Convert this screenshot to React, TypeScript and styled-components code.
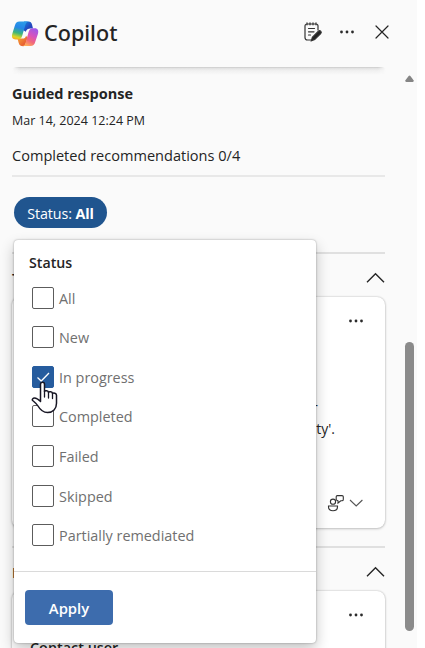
import React from "react";
import styled, { createGlobalStyle } from "styled-components";

const GlobalStyle = createGlobalStyle`
  * { box-sizing: border-box; }
  body { margin: 0; background: #fff; overflow: hidden; }
`;

const Frame = styled.div`
  width: 417px;
  height: 648px;
  overflow: hidden;
  display: flex;
  flex-direction: column;
  background: #fafafa;
  color: #242424;
  font-family: "Open Sans", "Noto Sans", sans-serif;
  font-size: 14px;
`;

const Header = styled.header`
  flex: none;
  height: 67px;
  padding: 0 27px 0 11px;
  display: flex;
  align-items: center;
`;

const Brand = styled.h1`
  margin: 0 auto 2px 5px;
  font-family: "Noto Sans", sans-serif;
  font-size: 21.6px;
  font-weight: 500;
  line-height: 30px;
`;

const Actions = styled.div`
  display: flex;
  align-items: center;
  gap: 15px;
  padding-bottom: 3px;
  svg:last-child { margin-left: 3px; }
`;

const Body = styled.div`
  flex: 1;
  min-height: 0;
  display: flex;
`;

const Content = styled.main`
  width: 401px;
  padding: 0 16px 0 12px;
  flex: none;
`;

const HeaderEdge = styled.div`
  height: 8px;
  margin-right: -1px;
  border-radius: 4px;
  background: linear-gradient(#c9c9c9, #e3e3e3 18%, #f0f0f0 45%, #fafafa);
  mask-image: linear-gradient(90deg, transparent, #000 8px, #000 calc(100% - 8px), transparent);
`;

const Title = styled.div`
  height: 100px;
  padding: 8px 0 0;
`;

const Line = styled.p<{ $size: number; $height: number; $weight?: number }>`
  margin: 0;
  font-size: ${(p) => p.$size}px;
  line-height: ${(p) => p.$height}px;
  font-weight: ${(p) => p.$weight ?? 400};
  white-space: nowrap;
`;

const Rule = styled.hr<{ $color?: string }>`
  margin: 0;
  border: 0;
  height: 2px;
  background: ${(p) => p.$color ?? "#e0e0e0"};
`;

const FilterBar = styled.div`
  position: relative;
  height: 75px;
  padding: 20px 0 0 2px;
`;

const Pill = styled.button`
  width: 93px;
  height: 31px;
  padding: 2px 0 0;
  border: 0;
  border-radius: 16px;
  background: #20558f;
  color: #fff;
  font: 400 14.3px/20px "Open Sans", sans-serif;
  letter-spacing: -0.1px;
  display: block;
  b { font-weight: 700; }
`;

const Popover = styled.div`
  position: absolute;
  z-index: 2;
  left: 2px;
  top: 63px;
  width: 302px;
  height: 403px;
  border-radius: 4px;
  background: #fff;
  box-shadow: 0 0 2px rgba(0, 0, 0, 0.38), 0 6px 14px rgba(0, 0, 0, 0.24);
`;

const Options = styled.div`
  height: 332px;
  padding: 13px 0 0 15px;
  border-bottom: 1px solid #dadada;
`;

const OptionList = styled.div`
  padding: 13.8px 0 0 3px;
`;

const Option = styled.label`
  height: 39.55px;
  display: flex;
  align-items: flex-start;
  gap: 5px;
  color: #707070;
  font-size: 14.4px;
  line-height: 22px;
`;

const OptionName = styled.span`
  padding-top: 1px;
`;

const Box = styled.span<{ $on: boolean }>`
  position: relative;
  width: 22px;
  height: 22px;
  border: 1px solid ${(p) => (p.$on ? "#265c9e" : "#5c5c5c")};
  border-radius: 2px;
  background: ${(p) => (p.$on ? "#265c9e" : "#fff")};
  svg { display: block; }
`;

const Hand = styled.svg`
  position: absolute;
  z-index: 3;
  left: -2px;
  top: 14px;
`;

const Footer = styled.div`
  padding: 18px 0 0 11px;
`;

const Apply = styled.button`
  width: 88px;
  height: 35px;
  padding: 1px 0 0;
  border: 0;
  border-radius: 4px;
  background: #3d6cad;
  color: #fff;
  font: 600 14.8px/20px "Open Sans", sans-serif;
`;

const SectionHead = styled.div`
  height: 43px;
  display: flex;
  align-items: center;
  justify-content: space-between;
  padding-top: 4px;
  font-size: 15px;
  font-weight: 600;
  svg { flex: none; }
`;

const SectionGap = styled.div`
  height: 18px;
`;

const Card = styled.section`
  height: 231px;
  border-radius: 8px;
  background: #fff;
  box-shadow: 0 0 2px rgba(0, 0, 0, 0.24), 0 1px 3px rgba(0, 0, 0, 0.18);
  padding: 16px 20px 0 18px;
  display: flex;
  flex-direction: column;
`;

const CardMenu = styled.div`
  height: 16px;
  display: flex;
  justify-content: flex-end;
`;

const Summary = styled.div`
  margin: 64px 0 0;
  width: 305px;
  font-size: 14px;
  line-height: 24px;
  text-align: right;
  span { display: block; padding-right: 17px; }
`;

const CardTools = styled.div`
  margin-top: 53px;
  padding-right: 1px;
  display: flex;
  justify-content: flex-end;
  align-items: center;
  gap: 3px;
`;

const Scrollbar = styled.div`
  width: 16px;
  padding-top: 8px;
  display: flex;
  flex-direction: column;
  align-items: center;
`;

const Thumb = styled.div`
  width: 9px;
  height: 289px;
  margin-top: 259px;
  border-radius: 5px;
  background: #8b8b8b;
`;

const CopilotLogo = () => (
  <svg width="28" height="28" viewBox="0 0 28 28" aria-hidden="true">
    <defs>
      <linearGradient id="cool" x1=".55" y1="0" x2=".3" y2="1">
        <stop offset="0" stopColor="#2b9be8" />
        <stop offset=".35" stopColor="#2586e8" />
        <stop offset=".65" stopColor="#3cb57b" />
        <stop offset=".88" stopColor="#ddd526" />
        <stop offset="1" stopColor="#f6ad26" />
      </linearGradient>
      <linearGradient id="warm" x1=".8" y1="0" x2=".3" y2="1">
        <stop offset="0" stopColor="#9a58ed" />
        <stop offset=".42" stopColor="#d952bb" />
        <stop offset=".7" stopColor="#f1677c" />
        <stop offset="1" stopColor="#ffaf58" />
      </linearGradient>
      <linearGradient id="fold" x1="0" y1="0" x2="1" y2="1">
        <stop offset="0" stopColor="#1788e1" />
        <stop offset=".6" stopColor="#2446bd" />
      </linearGradient>
      <linearGradient id="tail" x1="0" y1="0" x2="1" y2="1">
        <stop offset="0" stopColor="#f7ae35" />
        <stop offset="1" stopColor="#e24232" />
      </linearGradient>
    </defs>
    <path d="M13 1.500h4.500c2 0 3 1 3.500 3l1 4h-2.500c-2.500 0-4 1-4.700 3.200L12 10Z" fill="url(#fold)" />
    <path d="M6.500 18.500h5c2 0 3-.8 3.600-2.800l1.400 2-2.200 6.800c-.4 1.200-1 1.700-2 1.700-2.500 0-4-1-4.600-3.200Z" fill="url(#tail)" />
    <path d="M8.500 1.500H18c-2 0-3 1.300-3.600 3.300L11.200 15.700c-.6 2.100-1.800 3.800-4.200 3.800H4.500C1.500 19.500.3 17.300 1.300 13.800L3.800 5.800C4.700 2.800 5.800 1.500 8.500 1.500Z" fill="url(#cool)" />
    <path d="M19.500 26H11c2 0 3-1.300 3.600-3.300L17.600 12c.6-2.200 2-3.800 4.400-3.800h1.800c3 0 4.100 2.200 3.100 5.800l-2.600 7.700c-.9 3-2.100 4.300-4.800 4.300Z" fill="url(#warm)" />
  </svg>
);

const Notes = () => (
  <svg width="20" height="22" viewBox="0 0 20 22" fill="none" stroke="#333" strokeWidth="1.200" strokeLinecap="round">
    <path d="M8 19H4.500A2.500 2.500 0 0 1 2 16.500V5a2 2 0 0 1 2-2h9a2 2 0 0 1 2 2v4M4 1.800v2M7 1.800v2M10 1.800v2M13 1.800v2M5.500 7.500H11.500M5.500 10.800h5.500M5.500 14h2" />
    <path d="m8.400 19.700 1-3.500 6-6a1.600 1.600 0 0 1 2.300 2.300l-6 6.100Z" fill="#242424" />
  </svg>
);

const Dots = () => (
  <svg width="18" height="16" viewBox="-9 -8 18 16" fill="#2b2b2b">
    <circle cx="-5.500" r="1.400" />
    <circle r="1.400" />
    <circle cx="5.500" r="1.400" />
  </svg>
);

const Close = () => (
  <svg width="16" height="16" viewBox="0 0 16 16" stroke="#242424" strokeWidth="1.200" strokeLinecap="round">
    <path d="m2 2 12 12M14 2 2 14" />
  </svg>
);

const ChevronUp = () => (
  <svg width="20" height="14" viewBox="0 0 20 14" fill="none" stroke="#242424" strokeWidth="1.400">
    <path d="m2 11.200 8.500-8.500 8.500 8.500" />
  </svg>
);

const ChevronDown = () => (
  <svg width="16" height="12" viewBox="0 0 16 12" fill="none" stroke="#555" strokeWidth="1.100">
    <path d="m2 3 6.200 6 6.200-6" />
  </svg>
);

const Feedback = () => (
  <svg width="18" height="18" viewBox="0 0 18 18" fill="none" stroke="#333" strokeWidth="1.100">
    <circle cx="6" cy="7.700" r="2.600" />
    <path d="M1.500 12h9v1c0 2.300-1.700 3.700-4.500 3.700S1.500 15.300 1.500 13ZM9.200 6V2.700c0-.7.400-1.100 1.100-1.100H15c.8 0 1.300.5 1.300 1.200v2.700c0 .8-.5 1.300-1.300 1.300h-1.200L11 9V6.800Z" />
  </svg>
);

const PointerHand = () => (
  <Hand width="29" height="34" viewBox="0 0 29 34">
    <path
      d="M9.500 20.500V3.500c0-2.900 4-2.900 4 0v7c.6-1.200 3.800-1 4 .9.700-1.100 3.800-.7 4 1 1-.9 4-.3 4 1.800v8c0 5.500-3.500 9.300-9 9.300-5 0-7.500-3-9.500-6.500-1.500-2.500-3.500-4-5.300-5.500-1-1 .2-2.500 1.900-2.500 2.500 0 4.200 1.800 5.900 3.500Z"
      fill="#fff" stroke="#171624" strokeWidth="1.500" strokeLinejoin="round"
    />
    <path d="M13.500 10.500V16M17.500 11.400V17M21.500 12.400V17.500" stroke="#171624" strokeWidth="1.300" strokeLinecap="round" />
  </Hand>
);

const CheckMark = () => (
  <svg width="20" height="20" viewBox="0 0 20 20" fill="none" stroke="#fff" strokeWidth="1.300">
    <path d="m4.500 10.500 3.700 3.500 7.800-8" />
  </svg>
);

const statuses = ["All", "New", "In progress", "Completed", "Failed", "Skipped", "Partially remediated"];
const selected = "In progress";

const StatusFilter = () => (
  <FilterBar>
    <Pill>Status: <b>All</b></Pill>
    <Popover>
      <Options>
        <Line $size={14.200} $height={20} $weight={600}>Status</Line>
        <OptionList>
          {statuses.map((name) => (
            <Option key={name}>
              <Box $on={name === selected}>
                {name === selected && (
                  <>
                    <CheckMark />
                    <PointerHand />
                  </>
                )}
              </Box>
              <OptionName>{name}</OptionName>
            </Option>
          ))}
        </OptionList>
      </Options>
      <Footer><Apply>Apply</Apply></Footer>
    </Popover>
  </FilterBar>
);

export default function App() {
  return (
    <>
      <GlobalStyle />
      <Frame>
        <Header>
          <CopilotLogo />
          <Brand>Copilot</Brand>
          <Actions>
            <Notes />
            <Dots />
            <Close />
          </Actions>
        </Header>
        <Body>
          <Content>
            <HeaderEdge />
            <Title>
              <Line $size={14.5} $height={22} $weight={700}>Guided response</Line>
              <Line $size={12.5} $height={32}>Mar 14, 2024 12:24 PM</Line>
              <Line $size={14.55} $height={36}>Completed recommendations 0/4</Line>
            </Title>
            <Rule $color="#e8e8e8" />
            <StatusFilter />
            <Rule />
            <SectionHead>Triage<ChevronUp /></SectionHead>
            <Card>
              <CardMenu><Dots /></CardMenu>
              <Summary><span>-</span>ty'.</Summary>
              <CardTools><Feedback /><ChevronDown /></CardTools>
            </Card>
            <SectionGap />
            <Rule />
            <SectionHead>Investigation<ChevronUp /></SectionHead>
            <Card>
              <CardMenu><Dots /></CardMenu>
              <Line $size={14.4} $height={50} $weight={600}>Contact user</Line>
            </Card>
          </Content>
          <Scrollbar>
            <svg width="9" height="8" viewBox="0 0 9 8"><path d="M3.600 1Q4.500 0 5.400 1L8.700 5.600Q9 7 7.700 7H1.300Q0 7 .3 5.600Z" fill="#858585" /></svg>
            <Thumb />
          </Scrollbar>
        </Body>
      </Frame>
    </>
  );
}
